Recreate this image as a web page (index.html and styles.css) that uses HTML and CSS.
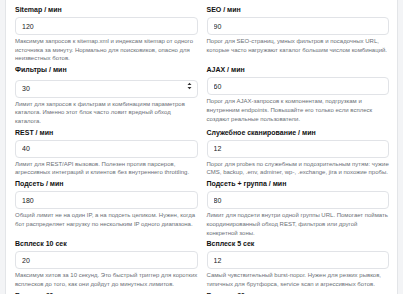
FILE: index.html
```html
<!DOCTYPE html>
<html>
<head>
  <meta charset="utf-8">
  <title>Лимиты запросов</title>
  <link rel="stylesheet" href="styles.css">
</head>
<body>
  <div class="card">
    <div class="grid">
      <div class="field">
        <label class="field-label">Sitemap / мин</label>
        <input class="field-input" type="text" value="120">
        <p class="field-help">Максимум запросов к sitemap.xml и индексам sitemap от одного источника за минуту. Нормально для поисковиков, опасно для неизвестных ботов.</p>
      </div>
      <div class="field">
        <label class="field-label">SEO / мин</label>
        <input class="field-input" type="text" value="90">
        <p class="field-help">Порог для SEO-страниц, умных фильтров и посадочных URL, которые часто нагружают каталог большим числом комбинаций.</p>
      </div>

      <div class="field">
        <label class="field-label">Фильтры / мин</label>
        <div class="input-wrap">
          <input class="field-input" type="text" value="30">
          <svg class="spinner" width="5" height="8" viewBox="0 0 5 8">
            <path d="M0.5 3 L2.5 0.8 L4.5 3 Z M0.5 5 L2.5 7.2 L4.5 5 Z" fill="#333"/>
          </svg>
        </div>
        <p class="field-help">Лимит для запросов к фильтрам и комбинациям параметров каталога. Именно этот блок часто ловит вредный обход каталога.</p>
      </div>
      <div class="field">
        <label class="field-label">AJAX / мин</label>
        <input class="field-input" type="text" value="60">
        <p class="field-help">Порог для AJAX-запросов к компонентам, подгрузкам и внутренним endpoints. Повышайте его только если всплеск создают реальные пользователи.</p>
      </div>

      <div class="field">
        <label class="field-label">REST / мин</label>
        <input class="field-input" type="text" value="40">
        <p class="field-help">Лимит для REST/API вызовов. Полезен против парсеров, агрессивных интеграций и клиентов без внутреннего throttling.</p>
      </div>
      <div class="field">
        <label class="field-label">Служебное сканирование / мин</label>
        <input class="field-input" type="text" value="12">
        <p class="field-help">Порог для probes по служебным и подозрительным путям: чужие CMS, backup, .env, adminer, wp-, .exchange, jira и похожие пробы.</p>
      </div>

      <div class="field">
        <label class="field-label">Подсеть / мин</label>
        <input class="field-input" type="text" value="180">
        <p class="field-help">Общий лимит не на один IP, а на подсеть целиком. Нужен, когда бот распределяет нагрузку по нескольким IP одного диапазона.</p>
      </div>
      <div class="field">
        <label class="field-label">Подсеть + группа / мин</label>
        <input class="field-input" type="text" value="80">
        <p class="field-help">Лимит для подсети внутри одной группы URL. Помогает поймать координированный обход REST, фильтров или другой конкретной зоны.</p>
      </div>

      <div class="field">
        <label class="field-label">Всплеск 10 сек</label>
        <input class="field-input" type="text" value="20">
        <p class="field-help">Максимум хитов за 10 секунд. Это быстрый триггер для коротких всплесков до того, как они дойдут до минутных лимитов.</p>
      </div>
      <div class="field">
        <label class="field-label">Всплеск 5 сек</label>
        <input class="field-input" type="text" value="12">
        <p class="field-help">Самый чувствительный burst-порог. Нужен для резких рывков, типичных для брутфорса, service scan и агрессивных ботов.</p>
      </div>

      <div class="field">
        <label class="field-label">Всплеск 60 сек</label>
        <input class="field-input" type="text" value="60">
      </div>
      <div class="field">
        <label class="field-label">Всплеск 30 сек</label>
        <input class="field-input" type="text" value="30">
      </div>
    </div>
  </div>
</body>
</html>
```

FILE: styles.css
```css
body {
  margin: 0;
  background-color: #f3f4f6;
  font-family: "Liberation Sans", Arial, sans-serif;
  overflow: hidden;
}
.card {
  background-color: #ffffff;
  border: 1px solid #e3e5e8;
  border-radius: 6px;
  margin: -10px 5px 0 5px;
  padding: 14px 8px 10px 9px;
}
.grid {
  display: grid;
  grid-template-columns: 1fr 1fr;
  column-gap: 9px;
  row-gap: 2px;
}
.field {
  display: flex;
  flex-direction: column;
}
.field-label {
  font-size: 7px;
  line-height: 9px;
  font-weight: bold;
  color: #111111;
  margin-bottom: 3px;
}
.input-wrap {
  position: relative;
}
.field-input {
  box-sizing: border-box;
  width: 100%;
  height: 18px;
  margin: 0;
  padding: 0 6px;
  border: 1px solid #e1e3e7;
  border-radius: 4px;
  background: #ffffff;
  font-family: "Liberation Sans", Arial, sans-serif;
  font-size: 7px;
  color: #222222;
  outline: none;
}
.spinner {
  position: absolute;
  right: 6px;
  top: 5px;
}
.field-help {
  margin: 2px 0 0 0;
  font-size: 6px;
  line-height: 8.7px;
  color: #6b6f76;
}
```
